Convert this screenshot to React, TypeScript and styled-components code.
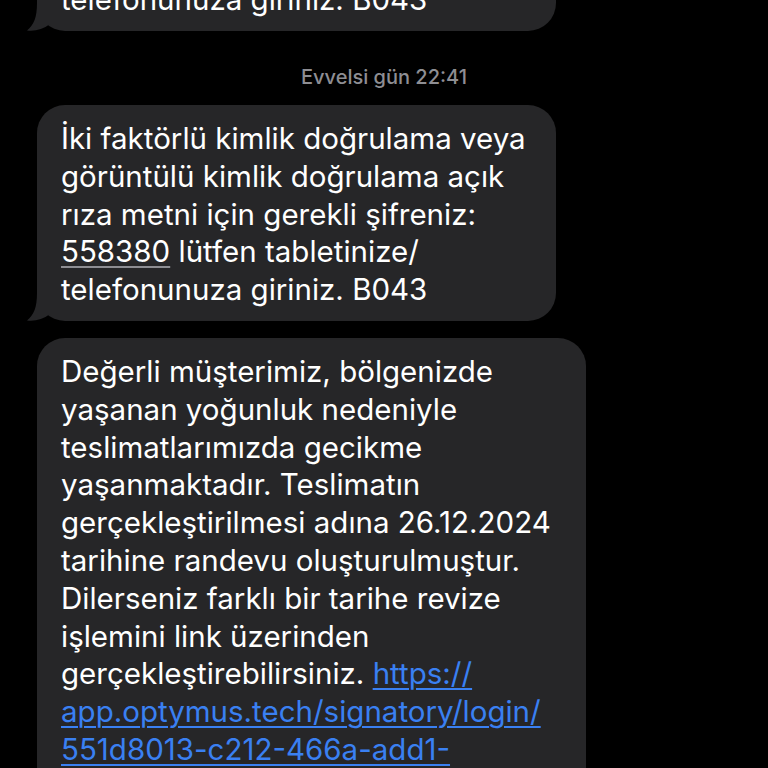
import React from "react";
import styled, { createGlobalStyle } from "styled-components";

const Global = createGlobalStyle`
  html, body { margin: 0; padding: 0; background: #000; }
  body {
    font-family: Inter, "Noto Sans", "Liberation Sans", sans-serif;
    -webkit-font-smoothing: antialiased;
    overflow: hidden;
  }
`;

const Screen = styled.main`
  width: 768px;
  height: 768px;
  overflow: hidden;
  background: #000;
`;

const Thread = styled.div`
  display: flex;
  flex-direction: column;
  align-items: flex-start;
  margin-top: -185px;
`;

const Stamp = styled.div`
  align-self: stretch;
  text-align: center;
  color: #8e8e93;
  font-size: 20px;
  font-weight: 500;
  line-height: 22px;
  margin: 35px 0 17px;
`;

const Bubble = styled.div<{ $w: number; $gap?: number }>`
  position: relative;
  box-sizing: border-box;
  width: ${(p) => p.$w}px;
  margin-left: 37px;
  margin-bottom: ${(p) => p.$gap ?? 0}px;
  background: #262628;
  border-radius: 28px;
  padding: 15px 0 12px 24px;
  color: #fff;
  font-size: 29.5px;
  line-height: 37.8px;
  letter-spacing: 0;
  white-space: nowrap;
`;

const Tail = styled.svg`
  position: absolute;
  left: -11px;
  bottom: 0;
  width: 24px;
  height: 28px;
  display: block;
`;

const Code = styled.span`
  text-decoration: underline;
  text-decoration-color: #8e8e93;
  text-decoration-thickness: 2px;
  text-underline-offset: 4px;
`;

const Link = styled.span`
  color: #3a80f2;
  text-decoration: underline;
  text-decoration-thickness: 2px;
  text-underline-offset: 4px;
`;

const BubbleTail = () => (
  <Tail viewBox="0 0 24 28">
    <path d="M11 0 C11 14 8 22 1 27.5 C9 28.5 17 26.5 24 21 L24 0 Z" fill="#262628" />
  </Tail>
);

const OtpMessage = ({ gap }: { gap?: number }) => (
  <Bubble $w={519} $gap={gap}>
    İki faktörlü kimlik doğrulama veya
    <br />
    görüntülü kimlik doğrulama açık
    <br />
    rıza metni için gerekli şifreniz:
    <br />
    <Code>558380</Code> lütfen tabletinize/
    <br />
    telefonunuza giriniz. B043
    <BubbleTail />
  </Bubble>
);

export default function App() {
  return (
    <Screen>
      <Global />
      <Thread>
        <OtpMessage />
        <Stamp>Evvelsi gün 22:41</Stamp>
        <OtpMessage gap={17} />
        <Bubble $w={549}>
          Değerli müşterimiz, bölgenizde
          <br />
          yaşanan yoğunluk nedeniyle
          <br />
          teslimatlarımızda gecikme
          <br />
          yaşanmaktadır. Teslimatın
          <br />
          gerçekleştirilmesi adına 26.12.2024
          <br />
          tarihine randevu oluşturulmuştur.
          <br />
          Dilerseniz farklı bir tarihe revize
          <br />
          işlemini link üzerinden
          <br />
          gerçekleştirebilirsiniz. <Link>https://</Link>
          <br />
          <Link>app.optymus.tech/signatory/login/</Link>
          <br />
          <Link>551d8013-c212-466a-add1-</Link>
          <br />
          <Link>b0f2c0a1e7d4</Link>
          <BubbleTail />
        </Bubble>
      </Thread>
    </Screen>
  );
}
